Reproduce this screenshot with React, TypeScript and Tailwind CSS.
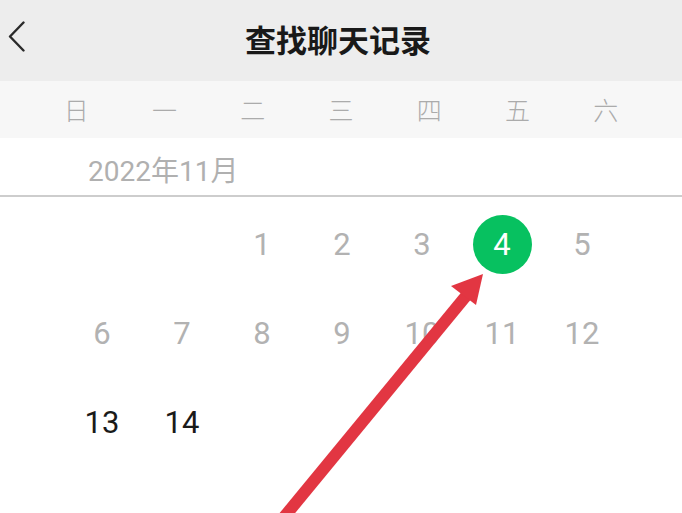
import React from "react";

const weekdays = ["日", "一", "二", "三", "四", "五", "六"];

type Cell = { n: number | null; active?: boolean; selected?: boolean };

const rows: Cell[][] = [
  [{ n: null }, { n: null }, { n: 1 }, { n: 2 }, { n: 3 }, { n: 4, selected: true }, { n: 5 }],
  [{ n: 6 }, { n: 7 }, { n: 8 }, { n: 9 }, { n: 10 }, { n: 11 }, { n: 12 }],
  [{ n: 13, active: true }, { n: 14, active: true }, { n: null }, { n: null }, { n: null }, { n: null }, { n: null }],
];

export default function App() {
  return (
    <div
      className="relative w-[682px] h-[513px] overflow-hidden bg-white"
      style={{ fontFamily: 'Roboto, "Noto Sans CJK SC", sans-serif' }}
    >
      {/* Header */}
      <div className="relative h-[81px] bg-[#ededed] flex items-center justify-center pb-[5px] pr-[6px]">
        <div className="absolute left-[8px] top-[21px] w-[18px] h-[32px]">
          <svg width="18" height="32" viewBox="0 0 18 32" fill="none">
            <path d="M15.5 1.5 L2 15.5 L15.5 29.5" stroke="#2a2a2a" strokeWidth="2.4" strokeLinecap="round" strokeLinejoin="round" />
          </svg>
        </div>
        <div
          className="text-[31px] font-semibold text-[#191919] leading-none"
          style={{ fontFamily: '"Noto Sans CJK SC", sans-serif' }}
        >
          查找聊天记录
        </div>
      </div>

      {/* Weekday row */}
      <div className="h-[57px] bg-[#f7f7f7] grid grid-cols-7 px-[32px] items-center">
        {weekdays.map((w) => (
          <div
            key={w}
            className="text-center text-[25px] font-light text-[#ababab] leading-none"
            style={{ fontFamily: '"Noto Sans CJK SC", sans-serif' }}
          >
            {w}
          </div>
        ))}
      </div>

      {/* Month row */}
      <div className="h-[59px] border-b-2 border-[#cdcdcd] flex items-center pl-[88px] pt-[11px]">
        <span className="text-[28px] text-[#b0b0b0] leading-none">
          2022年11月
        </span>
      </div>

      {/* Calendar grid */}
      <div className="ml-[62px] w-[560px] pt-[3px]">
        {rows.map((row, ri) => (
          <div key={ri} className="grid grid-cols-7 h-[89px]">
            {row.map((c, ci) => (
              <div key={ci} className="flex items-center justify-center">
                {c.n !== null &&
                  (c.selected ? (
                    <div className="w-[59px] h-[59px] rounded-full bg-[#07c160] flex items-center justify-center text-white text-[31px] leading-none">
                      {c.n}
                    </div>
                  ) : (
                    <span
                      className={
                        "text-[31px] leading-none " +
                        (c.active ? "text-[#1a1a1a]" : "text-[#b2b2b2]")
                      }
                    >
                      {c.n}
                    </span>
                  ))}
              </div>
            ))}
          </div>
        ))}
      </div>

      {/* Red arrow overlay */}
      <svg
        className="absolute left-0 top-0 pointer-events-none"
        width="682"
        height="513"
        viewBox="0 0 682 513"
      >
        <line x1="280" y1="522" x2="466" y2="296" stroke="#e23642" strokeWidth="12" />
        <polygon points="483,274 451,286 476,305" fill="#e23642" />
      </svg>
    </div>
  );
}
